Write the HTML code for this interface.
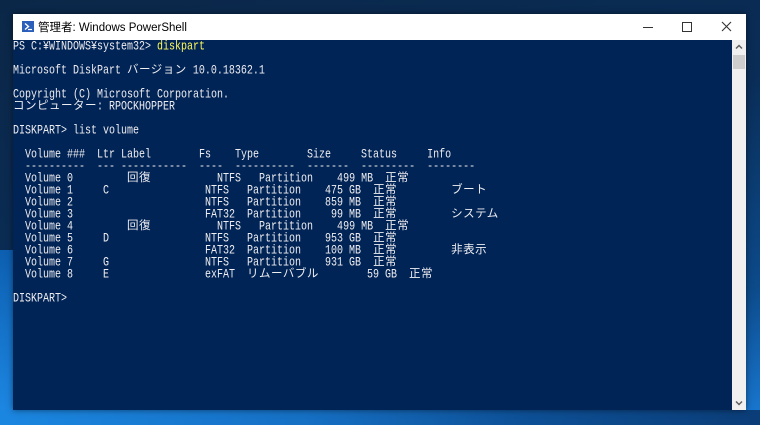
<!DOCTYPE html>
<html><head><meta charset="utf-8"><style>
html,body{margin:0;padding:0;overflow:hidden}
body{width:760px;height:425px;position:relative;
background:linear-gradient(160deg,#0b2748 0%,#0a2d57 50%,#0c4a8a 80%,#1a7bd6 100%);}
.bl{position:absolute;left:0;top:250px;width:14px;height:175px;background:linear-gradient(#0d5fb0,#1e8ae6)}
.bb{position:absolute;left:0;top:410px;width:760px;height:15px;background:linear-gradient(90deg,#1b86e0,#1670c4 40%,#0d4f95 70%,#0b3d78)}
.win{position:absolute;left:13px;top:14px;width:733px;height:396px;background:#012456;box-shadow:0 0 6px rgba(0,0,0,.5);overflow:hidden}
.title{position:absolute;left:0;top:0;width:733px;height:26px;background:#fff;font:11.5px "Liberation Sans","Noto Sans CJK JP",sans-serif;color:#000}
.title .t{position:absolute;left:25px;top:5px}
.ico{position:absolute;left:9px;top:7px;width:12px;height:11px;background:#2b5fb9}
.ctl{position:absolute;top:0;height:26px}
.sb{position:absolute;left:719px;top:26px;width:14px;height:370px;background:#f0f0f0}
.th{position:absolute;left:1px;top:15px;width:12px;height:14px;background:#cdcdcd}
.con{position:absolute;left:0;top:28px;font:10px/12px "Liberation Mono",monospace;color:#eeedf0}
.l{height:12px;white-space:pre}
.s{display:inline-block;transform:scaleY(1.3);transform-origin:50% 50%;height:12px;vertical-align:top}
.j{font:11.5px/12px "Noto Sans CJK JP",sans-serif;display:inline-block;letter-spacing:.5px;vertical-align:top;height:12px;position:relative;top:-3px}
.y{color:#fef95f}
</style></head><body>
<div class="bl"></div><div class="bb"></div>
<div class="win">
<div class="title"><div class="ico"><svg width="12" height="11" viewBox="0 0 12 11"><path d="M3 2.5 L6.5 5.5 L3 8.5" stroke="#fff" stroke-width="1.4" fill="none"/><path d="M6 8.5h4" stroke="#fff" stroke-width="1.2"/></svg></div>
<span class="t">管理者: Windows PowerShell</span>
<svg class="ctl" style="left:570px" width="163" height="26"><path d="M60 13.5h10" stroke="#333" stroke-width="1"/><path d="M99.5 8.5h9v9h-9z" stroke="#333" fill="none"/><path d="M139 8l9 9M148 8l-9 9" stroke="#333" stroke-width="1.1"/></svg>
</div>
<div class="sb"><svg width="14" height="14"><path d="M4 8.5l3-3 3 3" stroke="#606060" stroke-width="1.5" fill="none"/></svg><div class="th"></div><svg style="position:absolute;left:0;top:356px" width="14" height="14"><path d="M4 5.5l3 3 3-3" stroke="#606060" stroke-width="1.5" fill="none"/></svg></div>
<div class="con"><div class="l"><span class="s">PS C:¥WINDOWS¥system32&gt; <span class="y">diskpart</span></span></div><div class="l"></div><div class="l"><span class="s">Microsoft DiskPart </span><span class="j">バージョン</span><span class="s"> 10.0.18362.1</span></div><div class="l"></div><div class="l"><span class="s">Copyright (C) Microsoft Corporation.</span></div><div class="l"><span class="j">コンピューター</span><span class="s">: RPOCKHOPPER</span></div><div class="l"></div><div class="l"><span class="s">DISKPART&gt; list volume</span></div><div class="l"></div><div class="l"><span class="s">  Volume ###  Ltr Label        Fs    Type        Size     Status     Info</span></div><div class="l"><span class="s">  ----------  --- -----------  ----  ----------  -------  ---------  --------</span></div><div class="l"><span class="s">  Volume 0         </span><span class="j">回復</span><span class="s">           NTFS   Partition    499 MB  </span><span class="j">正常</span></div><div class="l"><span class="s">  Volume 1     C                NTFS   Partition    475 GB  </span><span class="j">正常</span><span class="s">         </span><span class="j">ブート</span></div><div class="l"><span class="s">  Volume 2                      NTFS   Partition    859 MB  </span><span class="j">正常</span></div><div class="l"><span class="s">  Volume 3                      FAT32  Partition     99 MB  </span><span class="j">正常</span><span class="s">         </span><span class="j">システム</span></div><div class="l"><span class="s">  Volume 4         </span><span class="j">回復</span><span class="s">           NTFS   Partition    499 MB  </span><span class="j">正常</span></div><div class="l"><span class="s">  Volume 5     D                NTFS   Partition    953 GB  </span><span class="j">正常</span></div><div class="l"><span class="s">  Volume 6                      FAT32  Partition    100 MB  </span><span class="j">正常</span><span class="s">         </span><span class="j">非表示</span></div><div class="l"><span class="s">  Volume 7     G                NTFS   Partition    931 GB  </span><span class="j">正常</span></div><div class="l"><span class="s">  Volume 8     E                exFAT  </span><span class="j">リムーバブル</span><span class="s">        59 GB  </span><span class="j">正常</span></div><div class="l"></div><div class="l"><span class="s">DISKPART&gt;</span></div></div>
</div>
</body></html>
